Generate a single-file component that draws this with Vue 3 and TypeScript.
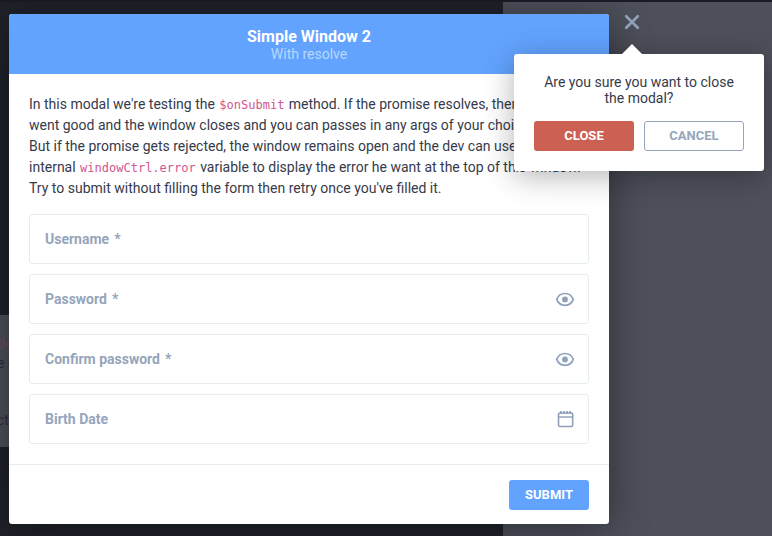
<script setup lang="ts">
import { reactive } from 'vue'

type FieldKey = 'username' | 'password' | 'confirm' | 'birthDate'

interface Field {
  key: FieldKey
  label: string
  type: string
  required: boolean
  icon?: 'eye' | 'calendar'
}

const fields: Field[] = [
  { key: 'username', label: 'Username', type: 'text', required: true },
  { key: 'password', label: 'Password', type: 'password', required: true, icon: 'eye' },
  { key: 'confirm', label: 'Confirm password', type: 'password', required: true, icon: 'eye' },
  { key: 'birthDate', label: 'Birth Date', type: 'text', required: false, icon: 'calendar' },
]

const form = reactive<Record<FieldKey, string>>({
  username: '',
  password: '',
  confirm: '',
  birthDate: '',
})
</script>

<template>
  <div class="page">
    <div class="backdrop" aria-hidden="true">
      <div class="backdrop-left">
        <div class="snippet">
          <div class="snippet-line code-tone">do</div>
          <div class="snippet-line">e o</div>
          <div class="snippet-line last">ct</div>
        </div>
      </div>
      <div class="backdrop-right"></div>
    </div>

    <main class="overlay">
      <section class="window" role="dialog" aria-labelledby="window-title">
        <header class="window-header">
          <h1 id="window-title">Simple Window 2</h1>
          <p>With resolve</p>
        </header>
        <form @submit.prevent>
          <div class="window-body">
            <p class="intro">
              In this modal we're testing the <code>$onSubmit</code> method. If the promise resolves, then all
              <br />went good and the window closes and you can passes in any args of your choice.
              <br />But if the promise gets rejected, the window remains open and the dev can use the
              <br />internal <code>windowCtrl.error</code> variable to display the error he want at the top of this window.
              <br />Try to submit without filling the form then retry once you've filled it.
            </p>
            <div class="fields">
              <div v-for="field in fields" :key="field.key" class="field">
                <label :for="field.key">{{ field.label }}<span v-if="field.required" class="star">*</span></label>
                <input :id="field.key" v-model="form[field.key]" :type="field.type" />
                <button v-if="field.icon === 'eye'" type="button" class="icon-button">
                  <svg width="20" height="20" viewBox="0 0 20 20" fill="none" stroke="currentColor" stroke-width="1.7">
                    <path d="M1.700 10.400C3.200 6.600 6.200 4.500 10 4.500s6.800 2.100 8.300 5.900c-1.500 3.800-4.500 5.900-8.300 5.900s-6.800-2.100-8.300-5.900z" stroke-linejoin="round" />
                    <circle cx="10" cy="10.400" r="2.900" fill="currentColor" stroke="none" />
                  </svg>
                </button>
                <button v-else-if="field.icon === 'calendar'" type="button" class="icon-button">
                  <svg width="20" height="20" viewBox="0 0 20 20" fill="none" stroke="currentColor">
                    <rect x="3.500" y="4" width="14.200" height="13.500" rx="1.500" stroke-width="1.600" />
                    <path d="M3.500 8h14.200" stroke-width="1.400" />
                    <path d="M6 2v3M9 2v3M12.100 2v3M15.200 2v3" stroke-width="1.700" />
                  </svg>
                </button>
              </div>
            </div>
          </div>
          <footer class="window-footer">
            <button type="submit" class="btn btn-submit">SUBMIT</button>
          </footer>
        </form>
      </section>

      <div class="closer">
        <button type="button" class="close-icon">
          <svg width="16" height="16" viewBox="0 0 16 16" fill="none" stroke="currentColor" stroke-width="2.700" stroke-linecap="round">
            <path d="M2.200 2.200l11.600 11.600M13.800 2.200L2.200 13.800" />
          </svg>
        </button>
        <div class="popover" role="alertdialog" aria-labelledby="confirm-text">
          <p id="confirm-text">Are you sure you want to close the modal?</p>
          <div class="actions">
            <button type="button" class="btn btn-danger">CLOSE</button>
            <button type="button" class="btn btn-outline">CANCEL</button>
          </div>
        </div>
      </div>
    </main>
  </div>
</template>

<style>
body {
  margin: 0;
  background: #1c1f28;
}
</style>

<style scoped>
.page {
  position: relative;
  min-height: 100vh;
  overflow: hidden;
  font-family: Roboto, 'Liberation Sans', sans-serif;
  font-size: 14px;
  color: #373a4a;
}

.page *,
.page *::before {
  box-sizing: border-box;
}

h1,
p {
  margin: 0;
}

.backdrop {
  position: absolute;
  inset: 0;
  display: grid;
  grid-template-columns: 503fr 269fr;
  border-top: 2px solid #191c26;
  background: #1f222a;
}

.backdrop-right {
  background: #4d4f5a;
}

.backdrop-left {
  display: flex;
  flex-direction: column;
  justify-content: flex-end;
  padding-bottom: 89px;
}

.snippet {
  padding: 18px 0 17px;
  background: #4d4f5a;
  text-indent: -3px;
}

.snippet-line {
  line-height: 20px;
  color: #2c2e3b;
}

.snippet-line.code-tone {
  color: #754560;
}

.snippet-line.last {
  margin-top: 37px;
}

.overlay {
  position: relative;
  display: flex;
  align-items: flex-start;
  padding: 14px 9px 12px;
}

.window {
  flex: 0 1 600px;
  min-width: 0;
  border-radius: 3px;
  background: #fff;
  box-shadow: 0 5px 40px rgba(0, 0, 0, 0.4);
}

.window-header {
  padding: 13px 20px;
  border-radius: 3px 3px 0 0;
  background: #62a3ff;
  text-align: center;
  color: #fff;
}

.window-header h1 {
  font-size: 16px;
  line-height: 20px;
  font-weight: 700;
}

.window-header p {
  line-height: 14px;
  color: #b7d7fc;
}

.window-body {
  padding: 20px;
}

.intro {
  line-height: 21px;
  white-space: nowrap;
}

.intro code {
  padding: 0 1px;
  font-family: 'DejaVu Sans Mono', monospace;
  font-size: 12px;
  line-height: 16px;
  color: #d2568f;
}

.fields {
  display: grid;
  gap: 10px;
  margin-top: 15px;
}

.field {
  display: flex;
  align-items: center;
  height: 50px;
  padding: 0 13px 0 15px;
  border: 1px solid #e6edee;
  border-radius: 3px;
}

.field label {
  font-weight: 700;
  color: #95a5bb;
}

.star {
  margin-left: 5px;
}

.field input {
  flex: 1;
  min-width: 0;
  height: 100%;
  border: 0;
  outline: 0;
  background: transparent;
  font: inherit;
  color: inherit;
}

.icon-button,
.close-icon {
  display: block;
  padding: 0;
  border: 0;
  background: none;
  color: #8fa1b9;
}

.icon-button svg,
.close-icon svg {
  display: block;
}

.window-footer {
  display: flex;
  justify-content: flex-end;
  padding: 15px 20px 14px;
  border-top: 1px solid #e6edee;
}

.btn {
  height: 30px;
  padding: 0 15px;
  border: 0;
  border-radius: 3px;
  font: 700 13px/16px Roboto, 'Liberation Sans', sans-serif;
  color: #fff;
}

.btn-submit {
  min-width: 80px;
  background: #62a3ff;
}

.btn-danger {
  background: #cc6053;
}

.btn-outline {
  border: 1px solid #95a5bb;
  background: #fff;
  color: #95a5bb;
}

.closer {
  position: relative;
  margin-left: 15px;
}

.popover {
  position: absolute;
  top: 40px;
  right: -124px;
  width: 250px;
  padding: 20px;
  border-radius: 3px;
  background: #fff;
  box-shadow: 0 5px 30px rgba(0, 0, 0, 0.3);
  text-align: center;
}

.popover::before {
  content: '';
  position: absolute;
  bottom: 100%;
  left: 108px;
  border: 10px solid transparent;
  border-top: 0;
  border-bottom-color: #fff;
}

.popover p {
  line-height: 16px;
}

.actions {
  display: grid;
  grid-template-columns: 1fr 1fr;
  gap: 10px;
  margin-top: 15px;
}
</style>
